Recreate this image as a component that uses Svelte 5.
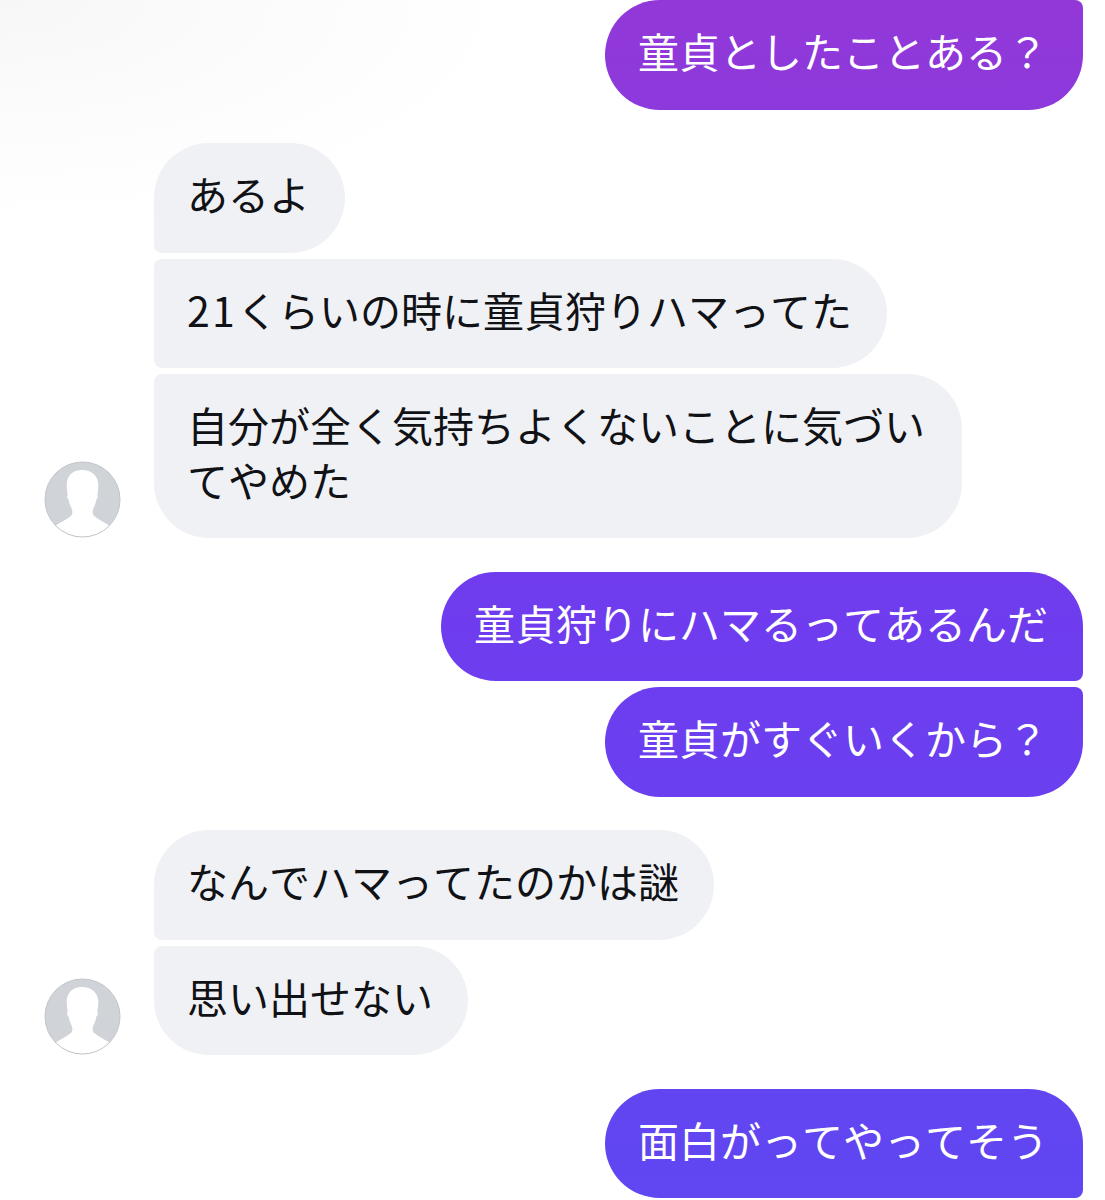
<script>
  const thread = [
    { from: 'me', msgs: ['童貞としたことある？'], continues: true },
    { from: 'them', msgs: ['あるよ', '21|くらいの時に童貞狩りハマってた', '自分が全く気持ちよくないことに気づいてやめた'] },
    { from: 'me', msgs: ['童貞狩りにハマるってあるんだ', '童貞がすぐいくから？'] },
    { from: 'them', msgs: ['なんでハマってたのかは謎', '思い出せない'] },
    { from: 'me', msgs: ['面白がってやってそう'], continued: true }
  ];
</script>

<main class="thread">
  {#each thread as group, g}
    <section class="group {group.from}">
      {#if group.from === 'them'}
        <svg class="avatar" viewBox="0 0 78 78" aria-hidden="true">
          <defs>
            <clipPath id="disc-{g}"><circle cx="39" cy="39" r="38" /></clipPath>
          </defs>
          <g clip-path="url(#disc-{g})">
            <rect width="78" height="78" fill="#d0d4d9" />
            <path
              fill="#fff"
              d="M38.5 9C29 9 23 15 23 24C23 28 23.5 31 24 34C23 35 23.5 38 25 39C25.5 43 27 46 28 48C29 51 29 53 28 55C25 58 19 61 14 64L7 68V80H71V68L64 64C59 61 53 58 50 55C49 53 49 51 50 48C51 46 52.5 43 53 39C54.5 38 55 35 54 34C54.500 31 55 28 55 24C55 15 48 9 38.500 9Z"
            />
          </g>
          <circle cx="39" cy="39" r="38" fill="none" stroke="#c0c3c7" stroke-width="1" />
        </svg>
      {/if}
      <div class="stack">
        {#each group.msgs as text, i}
          {@const parts = text.split('|')}
          <p
            class="bubble"
            class:start={i === 0 && !group.continues}
            class:end={i === group.msgs.length - 1 && !group.continued}
          >{#if parts.length > 1}<span class="num">{parts[0]}</span>{parts[1]}{:else}{text}{/if}</p>
        {/each}
      </div>
    </section>
  {/each}
</main>

<style>
  :global(body) {
    margin: 0;
    background: #fff;
  }
  .thread {
    display: flex;
    flex-direction: column;
    gap: 33.5px;
    height: 1200px;
    overflow: hidden;
    padding: 0 22px 0 44px;
    box-sizing: border-box;
    font-family: "Noto Sans CJK JP", "Liberation Sans", sans-serif;
    font-kerning: none;
    background: radial-gradient(ellipse 520px 220px at 0 0, #f7f7f7 0%, #fbfbfb 45%, #fff 100%);
  }
  .group {
    display: flex;
    align-items: flex-end;
    gap: 33px;
  }
  .group.me {
    justify-content: flex-end;
  }
  .avatar {
    flex: none;
    width: 77px;
    height: 77px;
  }
  .stack {
    display: flex;
    flex-direction: column;
    gap: 6px;
  }
  .me .stack {
    align-items: flex-end;
  }
  .them .stack {
    align-items: flex-start;
  }
  .bubble {
    margin: 0;
    max-width: 808px;
    padding: 23px 35px 32px 33px;
    box-sizing: border-box;
    font-size: 41px;
    line-height: 54.5px;
    font-weight: 400;
  }
  .num {
    letter-spacing: 2.2px;
  }
  .them .bubble {
    color: #111216;
    background: #f0f1f5;
    border-radius: 8px 55px 55px 8px;
  }
  .them .bubble.start {
    border-top-left-radius: 55px;
  }
  .them .bubble.end {
    border-bottom-left-radius: 55px;
  }
  .me .bubble {
    color: #fff;
    background-image: linear-gradient(180deg, #9338d8 0, #6f3cee 600px, #5f47f2 1200px);
    background-attachment: fixed;
    border-radius: 55px 8px 8px 55px;
  }
  .me .bubble.start {
    border-top-right-radius: 55px;
  }
  .me .bubble.end {
    border-bottom-right-radius: 55px;
  }
</style>
